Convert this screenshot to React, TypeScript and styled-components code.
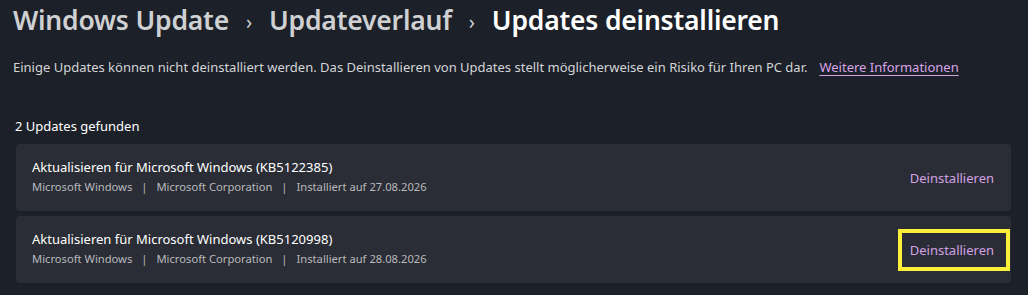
import React from "react";
import styled, { createGlobalStyle } from "styled-components";

const Global = createGlobalStyle`
  html, body { margin: 0; padding: 0; background: #1c2029; }
  body { font-family: "Noto Sans", "Open Sans", sans-serif; color: #ffffff; }
  * { box-sizing: border-box; }
`;

const Page = styled.div`
  width: 1028px;
  height: 295px;
  background: #1c2029;
  padding: 0 17px 0 13px;
  display: flex;
  flex-direction: column;
  overflow: hidden;
`;

const Breadcrumb = styled.div`
  display: flex;
  align-items: center;
  height: 40px;
  gap: 17px;
  font-size: 26.5px;
  font-weight: 600;
  letter-spacing: -0.2px;
`;

const Crumb = styled.span<{ $current?: boolean }>`
  color: ${(p) => (p.$current ? "#ffffff" : "#cfd0d2")};
`;

const Chevron = styled.span`
  color: #cfd0d2;
  font-size: 20px;
  font-weight: 400;
  padding-top: 2px;
`;

const Description = styled.p`
  margin: 17px 0 0 0;
  font-size: 13px;
  color: #d4d5d7;
  line-height: 20px;
`;

const Link = styled.a`
  color: #d8a4e8;
  text-decoration: underline;
  text-underline-offset: 3px;
  margin-left: 12px;
`;

const Count = styled.div`
  margin: 39px 0 0 2px;
  font-size: 13px;
  color: #ffffff;
  line-height: 20px;
`;

const List = styled.div`
  display: flex;
  flex-direction: column;
  gap: 5px;
  margin: 8px 0 0 3px;
`;

const Card = styled.div`
  height: 67px;
  background: #2a2d35;
  border-radius: 4px;
  display: flex;
  align-items: center;
  justify-content: space-between;
  padding: 0 16px 0 16px;
`;

const Info = styled.div`
  display: flex;
  flex-direction: column;
  gap: 2px;
  margin-top: -2px;
`;

const Title = styled.div`
  font-size: 13px;
  color: #ffffff;
  line-height: 19px;
`;

const Meta = styled.div`
  font-size: 11.2px;
  color: #b9babd;
  line-height: 16px;
  display: flex;
  gap: 9px;
`;

const Button = styled.button<{ $highlight?: boolean }>`
  font-family: inherit;
  font-size: 13px;
  color: #d3a2e4;
  background: transparent;
  border: 4px solid ${(p) => (p.$highlight ? "#fbef3a" : "transparent")};
  padding: 0 12px 0 8px;
  height: 42px;
  margin-right: -15px;
  cursor: pointer;
`;

const updates = [
  { kb: "KB5122385", date: "27.08.2026", highlight: false },
  { kb: "KB5120998", date: "28.08.2026", highlight: true },
];

export default function App() {
  return (
    <>
      <Global />
      <Page>
        <Breadcrumb>
          <Crumb>Windows Update</Crumb>
          <Chevron>›</Chevron>
          <Crumb>Updateverlauf</Crumb>
          <Chevron>›</Chevron>
          <Crumb $current>Updates deinstallieren</Crumb>
        </Breadcrumb>
        <Description>
          Einige Updates können nicht deinstalliert werden. Das Deinstallieren von Updates stellt möglicherweise ein Risiko für Ihren PC dar.
          <Link href="#">Weitere Informationen</Link>
        </Description>
        <Count>2 Updates gefunden</Count>
        <List>
          {updates.map((u) => (
            <Card key={u.kb}>
              <Info>
                <Title>Aktualisieren für Microsoft Windows ({u.kb})</Title>
                <Meta>
                  <span>Microsoft Windows</span>
                  <span>|</span>
                  <span>Microsoft Corporation</span>
                  <span>|</span>
                  <span>Installiert auf {u.date}</span>
                </Meta>
              </Info>
              <Button $highlight={u.highlight}>Deinstallieren</Button>
            </Card>
          ))}
        </List>
      </Page>
    </>
  );
}
